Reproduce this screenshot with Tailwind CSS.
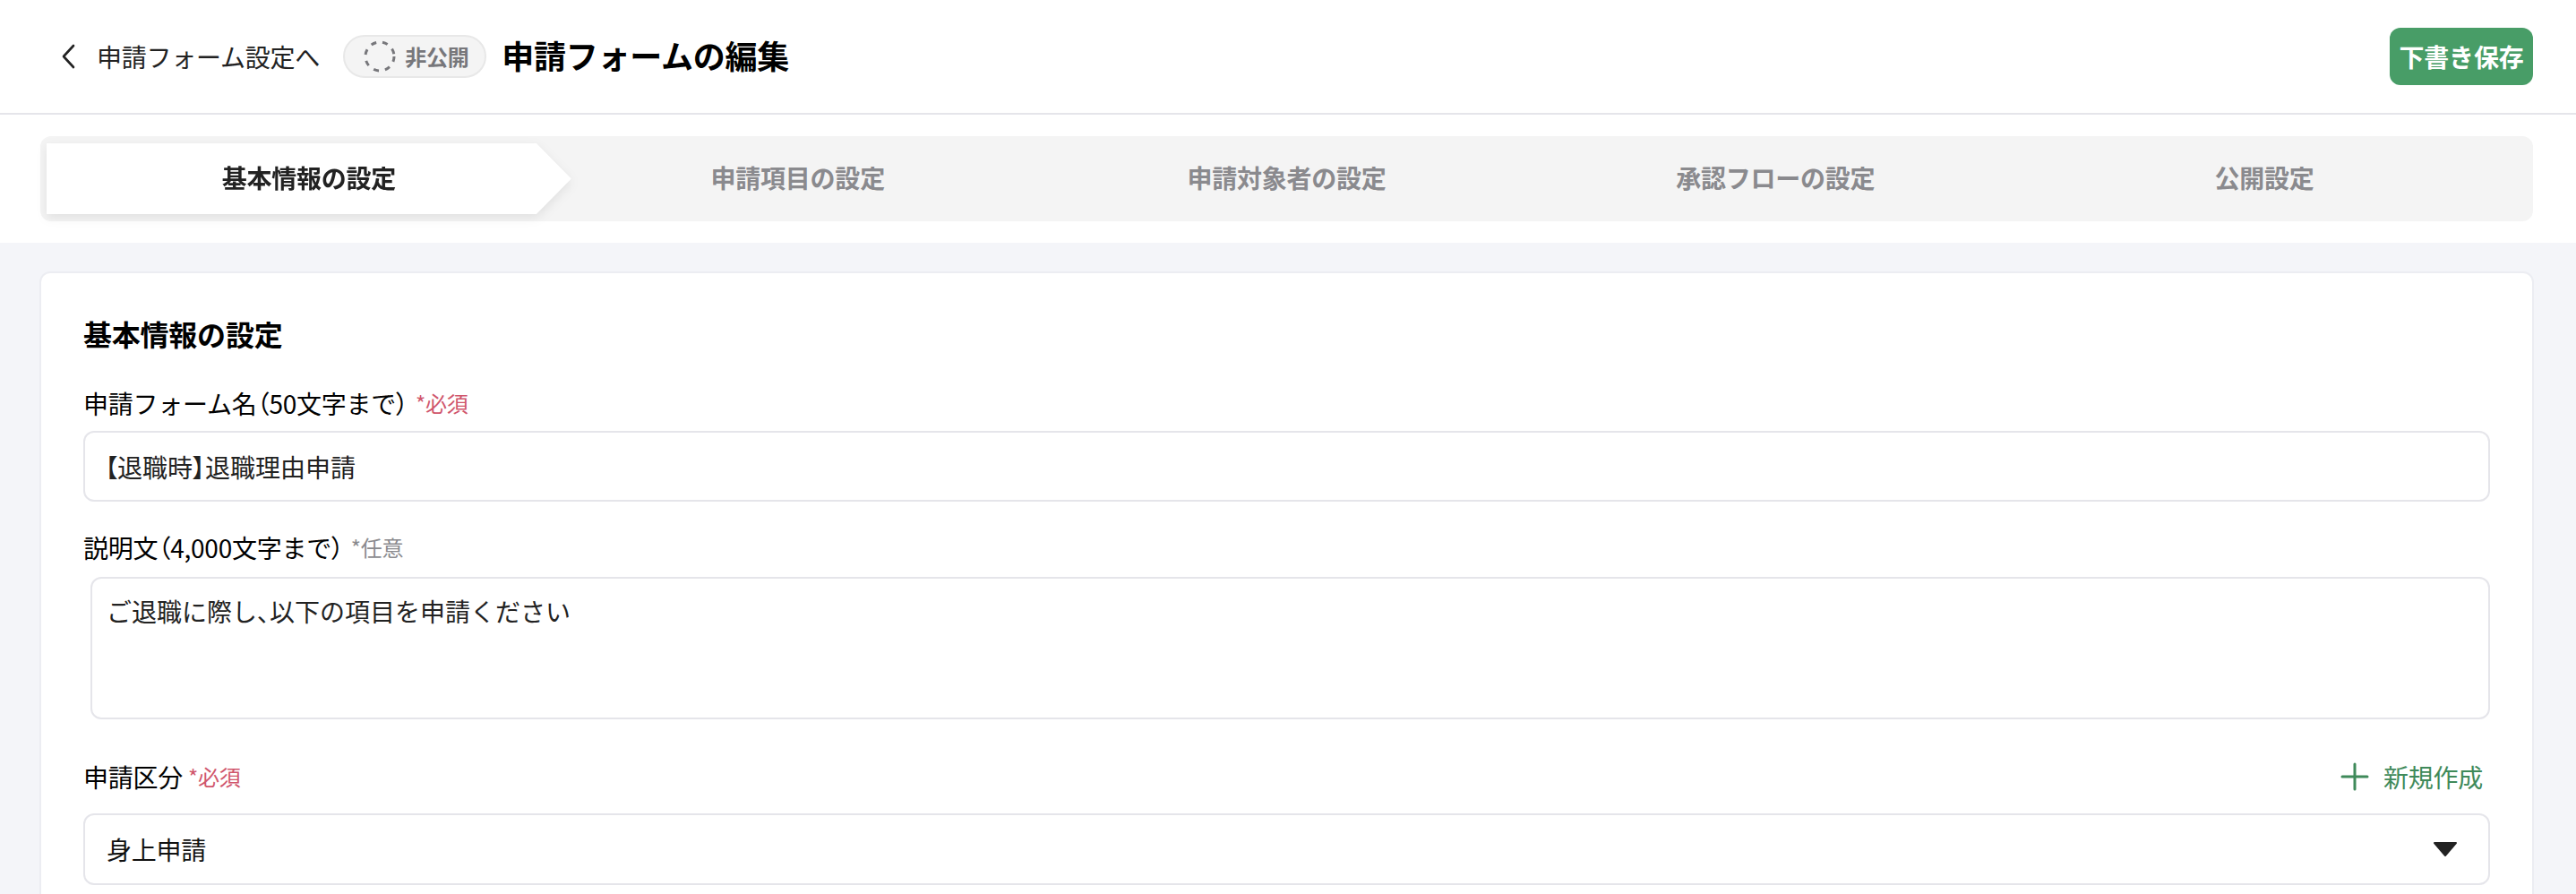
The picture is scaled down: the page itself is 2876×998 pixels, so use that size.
<!DOCTYPE html>
<html lang="ja">
<head>
<meta charset="utf-8">
<script src="https://cdn.jsdelivr.net/npm/@tailwindcss/browser@4"></script>
<title>申請フォームの編集</title>
</head>
<body class="h-[998px] overflow-hidden bg-[#f4f5f9] font-['Noto_Sans_CJK_JP','Noto_Sans',sans-serif] tracking-[-0.014em] text-black">
<header class="h-[128px] bg-white border-b-2 border-[#e5e5ea] flex items-center justify-between pl-[64px] pr-[48px]">
  <div class="flex items-center">
    <svg class="w-[24px] h-[32px] text-[#222]" viewBox="0 0 24 32" fill="none" stroke="currentColor" stroke-width="2.6" stroke-linecap="round" stroke-linejoin="round"><path d="M18 4 L7 16 L18 28"/></svg>
    <span class="ml-[20px] text-[28px] leading-[40px] text-[#222]">申請フォーム設定へ</span>
    <div class="ml-[26px] w-[160px] h-[48px] rounded-full bg-[#f4f4f4] border-2 border-[#e8e8e8] flex items-center pl-[21px]">
      <svg class="w-[36px] h-[36px] shrink-0" viewBox="0 0 36 36" fill="none" stroke="#77777b" stroke-width="3" stroke-dasharray="6 7"><circle cx="18" cy="18" r="16"/></svg>
      <span class="ml-[10px] text-[24px] leading-[32px] font-bold text-[#77777b] whitespace-nowrap">非公開</span>
    </div>
    <h1 class="ml-[17px] pb-[4px] text-[36px] leading-[48px] font-bold">申請フォームの編集</h1>
  </div>
  <button class="w-[160px] h-[64px] rounded-[12px] bg-[#489d67] text-white text-[28px] font-bold flex items-center justify-center">下書き保存</button>
</header>

<div class="bg-white h-[143px] pt-[24px] pl-[45px] pr-[48px]">
  <div class="h-[95px] rounded-[12px] bg-[#f4f4f4] px-[7px] py-[8px] flex">
    <div class="relative flex-1 -mr-[40px] z-10 drop-shadow-[0_4px_6px_rgba(0,0,0,0.08)]">
      <div class="h-full pb-[3px] bg-white flex items-center justify-center text-[28px] font-bold text-[#222] [clip-path:polygon(0_0,calc(100%-39px)_0,100%_50%,calc(100%-39px)_100%,0_100%)]">基本情報の設定</div>
    </div>
    <div class="flex-1 -mr-[40px] pb-[3px] flex items-center justify-center text-[28px] font-bold text-[#8a8a8e]">申請項目の設定</div>
    <div class="flex-1 -mr-[40px] pb-[3px] flex items-center justify-center text-[28px] font-bold text-[#8a8a8e]">申請対象者の設定</div>
    <div class="flex-1 -mr-[40px] pb-[3px] flex items-center justify-center text-[28px] font-bold text-[#8a8a8e]">承認フローの設定</div>
    <div class="flex-1 pb-[3px] flex items-center justify-center text-[28px] font-bold text-[#8a8a8e]">公開設定</div>
  </div>
</div>

<main class="mt-[32px] ml-[44px] mr-[47px] h-[800px] rounded-t-[12px] bg-white border-2 border-[#ecedf2] px-[47px] pt-[44px]">
  <h2 class="text-[32px] leading-[46px] font-bold">基本情報の設定</h2>
  <div class="mt-[35px] flex items-center h-[40px]">
    <span class="text-[28px] leading-[40px]">申請フォーム名<span class="[font-feature-settings:'palt']">（</span>50文字まで<span class="[font-feature-settings:'palt']">）</span></span>
    <span class="ml-[8px] text-[24px] leading-[40px] text-[#d0566c]">*必須</span>
  </div>
  <div class="mt-[11px] h-[79px] rounded-[12px] border-2 border-[#e5e5ea] pl-[22px] flex items-center text-[28px] tracking-normal text-[#222]"><span><span class="[font-feature-settings:'palt']">【</span>退職時<span class="[font-feature-settings:'palt']">】</span>退職理由申請</span></div>

  <div class="mt-[31px] flex items-center h-[40px]">
    <span class="text-[28px] leading-[40px]">説明文<span class="[font-feature-settings:'palt']">（</span>4,000文字まで<span class="[font-feature-settings:'palt']">）</span></span>
    <span class="ml-[8px] text-[24px] leading-[40px] text-[#8a8a8e]">*任意</span>
  </div>
  <div class="mt-[13px] ml-[8px] h-[159px] rounded-[12px] border-2 border-[#e5e5ea] pl-[16px] pt-[16px] text-[28px] leading-[40px] tracking-normal text-[#222]">ご退職に際し<span class="[font-feature-settings:'palt']">、</span>以下の項目を申請ください</div>

  <div class="mt-[40px] flex items-center justify-between h-[48px]">
    <div class="flex items-center">
      <span class="text-[28px] leading-[40px]">申請区分</span>
      <span class="ml-[6px] text-[24px] leading-[40px] text-[#d0566c]">*必須</span>
    </div>
    <div class="flex items-center pr-[8px]">
      <svg class="w-[32px] h-[32px]" viewBox="0 0 32 32" fill="none" stroke="#3f8a5a" stroke-width="3" stroke-linecap="round"><path d="M16 2 V30 M2 16 H30"/></svg>
      <span class="ml-[16px] text-[28px] leading-[40px] text-[#3f8a5a]">新規作成</span>
    </div>
  </div>
  <div class="mt-[17px] h-[80px] rounded-[12px] border-2 border-[#e5e5ea] pl-[24px] pr-[34px] flex items-center justify-between text-[28px] text-[#111]">
    <span>身上申請</span>
    <svg class="w-[28px] h-[18px]" viewBox="0 0 28 18" fill="#222" stroke="#222" stroke-width="2" stroke-linejoin="round"><path d="M2 2 H26 L14 16 Z"/></svg>
  </div>
</main>
</body>
</html>
